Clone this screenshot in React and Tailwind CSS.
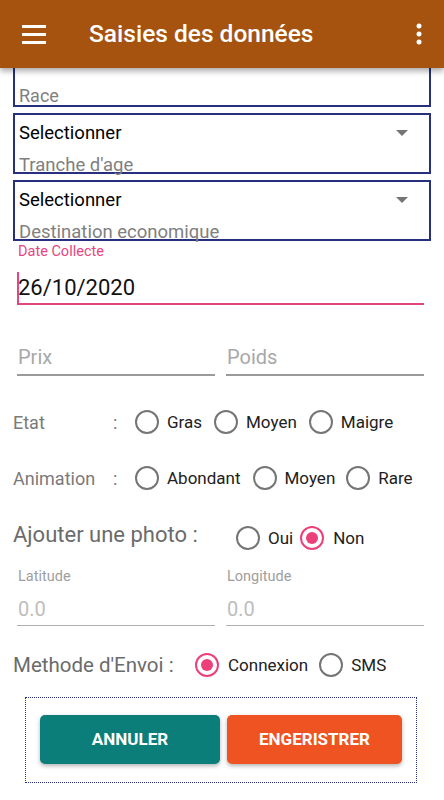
const Radio = ({ checked }) => (
  <span
    className={`flex h-[24px] w-[24px] shrink-0 items-center justify-center rounded-full border-2 ${
      checked ? "border-[#ec407a]" : "border-[#757575]"
    }`}
  >
    {checked && <span className="h-[12px] w-[12px] rounded-full bg-[#ec407a]" />}
  </span>
);

const Option = ({ label, checked, gap = "gap-[8px]", mr = "mr-[12px]" }) => (
  <div className={`flex items-center ${gap} ${mr}`}>
    <Radio checked={checked} />
    <span className="text-[17px] leading-[24px] text-[#212121]">{label}</span>
  </div>
);

const SelectBox = ({ hint }) => (
  <div className="mx-[13px] mt-[6px] h-[61px] border-2 border-[#27307f]">
    <div className="flex items-center justify-between pl-[4px] pr-[21px] pt-[7px]">
      <span className="text-[18.5px] leading-[22px] text-black">Selectionner</span>
      <svg width="12" height="6" viewBox="0 0 12 6">
        <path d="M0 0h12L6 6z" fill="#757575" />
      </svg>
    </div>
    <div className="mt-[10px] pl-[4px] text-[18.5px] leading-[22px] text-[#808080]">{hint}</div>
  </div>
);

export default function App() {
  return (
    <div className="h-[800px] w-[444px] overflow-hidden bg-white font-['Roboto',sans-serif]">
      <header className="relative z-10 flex h-[68px] items-center bg-[#a5530f] shadow-[0_3px_6px_rgba(0,0,0,0.35)]">
        <svg className="ml-[22px]" width="24" height="19" viewBox="0 0 24 19">
          <rect y="0" width="24" height="3" fill="white" />
          <rect y="8" width="24" height="3" fill="white" />
          <rect y="16" width="24" height="3" fill="white" />
        </svg>
        <h1 className="ml-[43px] text-[24.5px] font-medium text-white">Saisies des données</h1>
        <svg className="ml-auto mr-[22px]" width="6" height="22" viewBox="0 0 6 22">
          <circle cx="3" cy="3" r="2.5" fill="white" />
          <circle cx="3" cy="11" r="2.5" fill="white" />
          <circle cx="3" cy="19" r="2.5" fill="white" />
        </svg>
      </header>

      <main>
        <div className="mx-[13px] h-[39px] border-2 border-t-0 border-[#27307f] pl-[4px] pt-[18px] text-[18px] leading-[20px] text-[#808080]">
          Race
        </div>
        <div className="mt-[1px]" />
        <SelectBox hint="Tranche d'age" />
        <SelectBox hint="Destination economique" />

        <div className="mt-[3px] pl-[18px] text-[14.5px] leading-[16px] text-[#e8457f]">Date Collecte</div>
        <div className="relative mt-[14px] pl-[18px] text-[22px] leading-[28px] text-[#111]">
          <span className="absolute left-[17px] top-[-2px] h-[31px] w-[2px] bg-[#e8457f]" />
          26/10/2020
        </div>
        <div className="ml-[17px] mt-[1px] h-[2px] w-[407px] bg-[#e0457c]" />

        <div className="mt-[40px] flex gap-[11px] pl-[17px]">
          {["Prix", "Poids"].map((p) => (
            <div key={p} className="w-[198px]">
              <div className="pl-[1px] text-[20px] leading-[24px] text-[#a8a8a8]">{p}</div>
              <div className="mt-[5px] h-[2px] bg-[#9a9a9a]" />
            </div>
          ))}
        </div>

        <div className="mt-[32px] flex h-[28px] items-center pl-[13px]">
          <span className="w-[100px] text-[18px] text-[#7a7a7a]">Etat</span>
          <span className="w-[22px] text-[18px] text-[#7a7a7a]">:</span>
          <Option label="Gras" />
          <Option label="Moyen" />
          <Option label="Maigre" />
        </div>

        <div className="mt-[28px] flex h-[28px] items-center pl-[13px]">
          <span className="w-[100px] text-[18px] text-[#7a7a7a]">Animation</span>
          <span className="w-[22px] text-[18px] text-[#7a7a7a]">:</span>
          <Option label="Abondant" />
          <Option label="Moyen" mr="mr-[11px]" />
          <Option label="Rare" />
        </div>

        <div className="mt-[28px] flex h-[28px] items-center pl-[13px]">
          <span className="w-[223px] text-[22px] text-[#6b6b6b]">Ajouter une photo :</span>
          <div className="mt-[8px] flex items-center">
            <Option label="Oui" mr="mr-[7px]" />
            <Option label="Non" checked gap="gap-[9px]" />
          </div>
        </div>

        <div className="mt-[21px] flex gap-[11px] pl-[17px]">
          {["Latitude", "Longitude"].map((l) => (
            <div key={l} className="w-[198px]">
              <div className="pl-[1px] text-[14.5px] leading-[16px] text-[#9e9e9e]">{l}</div>
              <div className="mt-[12px] pl-[1px] text-[20px] leading-[24px] text-[#bdbdbd]">0.0</div>
              <div className="mt-[4px] h-[1px] bg-[#b0b0b0]" />
            </div>
          ))}
        </div>

        <div className="mt-[25px] flex h-[28px] items-center pl-[13px]">
          <span className="w-[182px] text-[20.5px] text-[#6b6b6b]">Methode d'Envoi :</span>
          <Option label="Connexion" checked gap="gap-[9px]" mr="mr-[11px]" />
          <Option label="SMS" />
        </div>

        <div className="ml-[25px] mt-[18px] flex h-[86px] w-[392px] gap-[7px] border border-dotted border-[#2a2f86] pl-[14px] pt-[17px]">
          <button className="h-[49px] w-[180px] rounded-[5px] bg-[#0b7e79] text-[17px] font-bold text-white shadow-[0_2px_4px_rgba(0,0,0,0.3)]">
            ANNULER
          </button>
          <button className="h-[49px] w-[175px] rounded-[5px] bg-[#ee5321] text-[17px] font-bold text-white shadow-[0_2px_4px_rgba(0,0,0,0.3)]">
            ENGERISTRER
          </button>
        </div>
      </main>
    </div>
  );
}
